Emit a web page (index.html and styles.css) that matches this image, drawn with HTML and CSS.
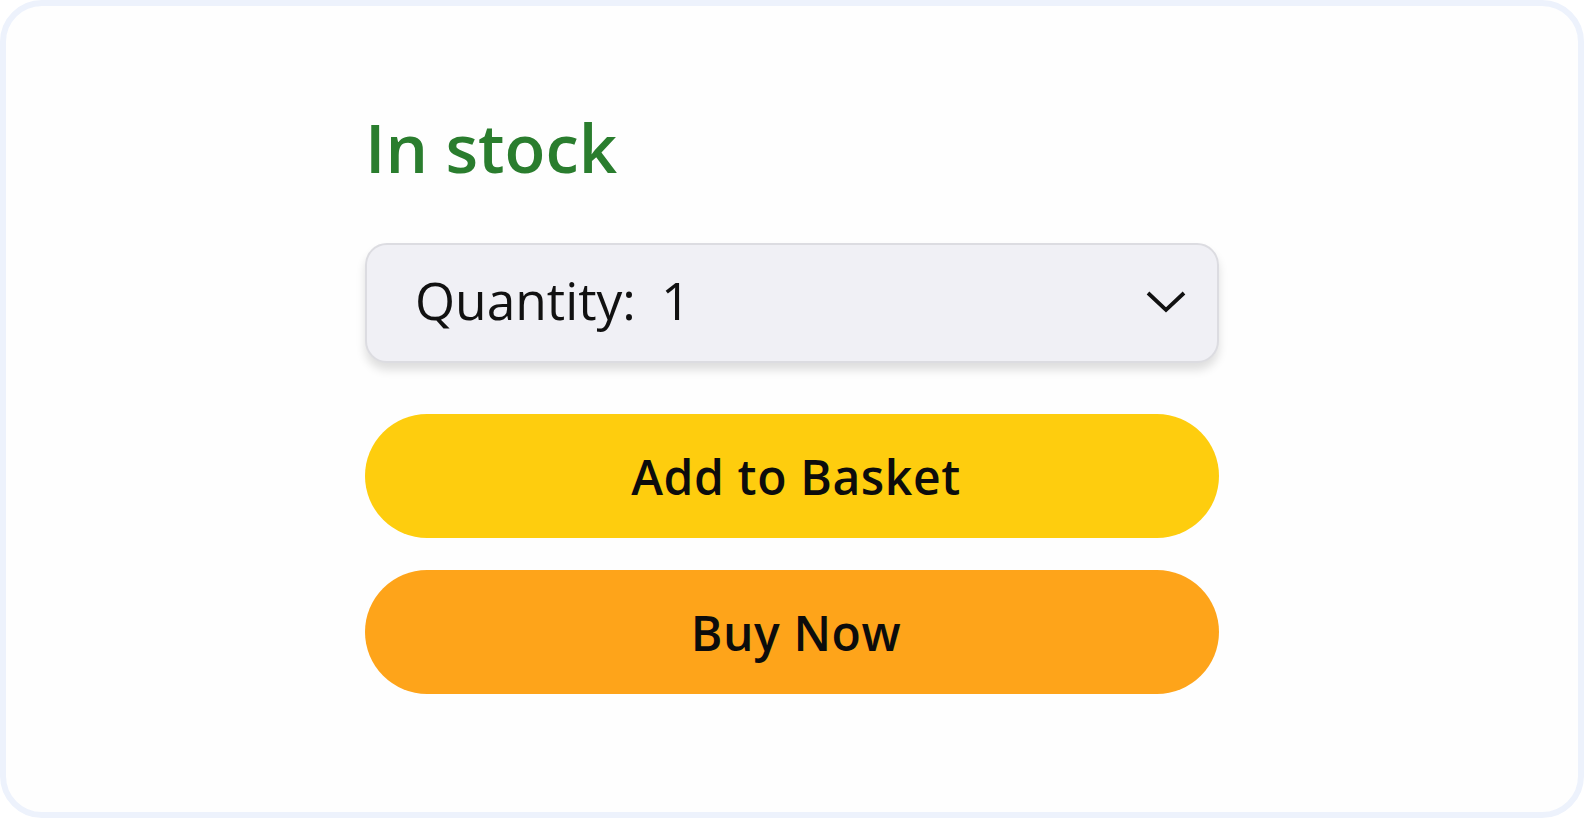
FILE: index.html
```html
<!DOCTYPE html>
<html lang="en">
<head>
<meta charset="utf-8">
<title>Buy box</title>
<link rel="stylesheet" href="styles.css">
</head>
<body>
<div class="frame">
  <div class="column">
    <div class="stock">In stock</div>
    <div class="qty">
      <span class="qty-label">Quantity:<span class="qty-value">1</span></span>
      <svg class="chev" width="40" height="24" viewBox="0 0 40 24" aria-hidden="true">
        <path d="M2 3 L20 20 L38 3" fill="none" stroke="#111" stroke-width="3.8" stroke-linecap="butt" stroke-linejoin="miter"/>
      </svg>
    </div>
    <button class="btn btn-add">Add to Basket</button>
    <button class="btn btn-buy">Buy Now</button>
  </div>
</div>
</body>
</html>
```

FILE: styles.css
```css
html, body {
  margin: 0;
  padding: 0;
  background: #ffffff;
}

.frame {
  box-sizing: border-box;
  height: 818px;
  border: 6px solid #edf2fc;
  border-radius: 42px;
  background: #fefefe;
  display: flex;
  justify-content: center;
  padding-top: 95px;
  font-family: "Open Sans", "Noto Sans", sans-serif;
}

.column {
  width: 854px;
  display: flex;
  flex-direction: column;
}

.stock {
  color: #2a7d2e;
  font-size: 67px;
  font-weight: 600;
  line-height: 93px;
  padding-left: 0;
  margin-bottom: 49px;
}

.qty {
  box-sizing: border-box;
  height: 120px;
  background: #f0f0f5;
  border: 2px solid #dcdce1;
  border-radius: 22px;
  box-shadow: 0 7px 10px rgba(0, 0, 0, 0.13);
  display: flex;
  align-items: center;
  justify-content: space-between;
  padding: 0 31px 0 48px;
  margin-bottom: 51px;
}

.qty-label {
  font-size: 51.5px;
  color: #111;
  line-height: 1;
  margin-top: -4px;
}

.qty-value {
  margin-left: 25px;
}

.chev {
  display: block;
  margin-top: -2px;
}

.btn {
  height: 124px;
  border: none;
  border-radius: 62px;
  font-family: "Open Sans", "Noto Sans", sans-serif;
  font-size: 48px;
  font-weight: 600;
  letter-spacing: 0.6px;
  color: #0c0c0c;
  padding: 0 0 0 8px;
  margin: 0;
}

.btn-add {
  background: #fecd0e;
  margin-bottom: 32px;
}

.btn-buy {
  background: #fea41a;
}
```
